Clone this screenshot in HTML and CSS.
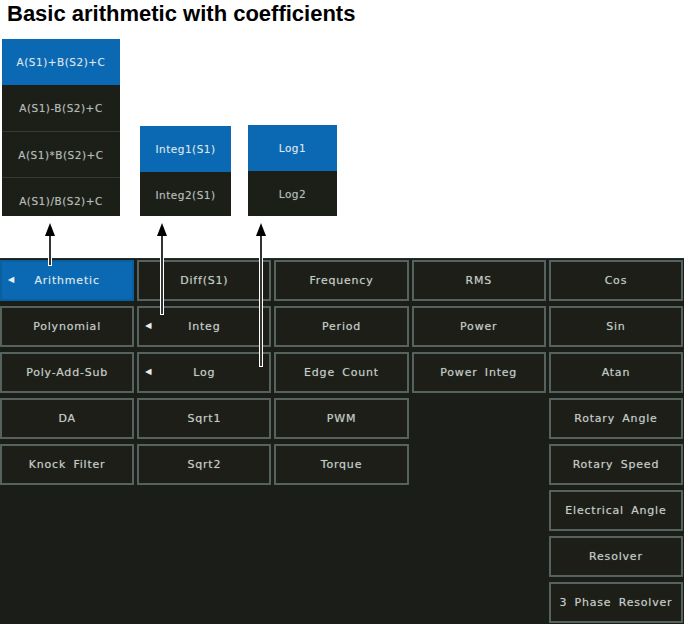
FILE: index.html
```html
<!DOCTYPE html>
<html lang="en">

<head>
        <meta charset="UTF-8">
        <meta name="viewport" content="width=device-width, initial-scale=1.0">
        <title>Basic arithmetic with coefficients</title>
        <link rel="stylesheet" href="styles.css">
</head>

<body>
        <div class="top">
                <h1 class="title">Basic arithmetic with coefficients</h1>
                <div class="menus">
                        <div class="menu menu-arith">
                                <div class="menu-item selected">A(S1)+B(S2)+C</div>
                                <div class="menu-item">A(S1)-B(S2)+C</div>
                                <div class="menu-item">A(S1)*B(S2)+C</div>
                                <div class="menu-item">A(S1)/B(S2)+C</div>
                        </div>
                        <div class="menu menu-integ">
                                <div class="menu-item selected">Integ1(S1)</div>
                                <div class="menu-item">Integ2(S1)</div>
                        </div>
                        <div class="menu menu-log">
                                <div class="menu-item selected">Log1</div>
                                <div class="menu-item">Log2</div>
                        </div>
                </div>
        </div>

        <div class="panel">
                <div class="col">
                        <div class="btn active"><span class="mark">&#9664;</span>Arithmetic</div>
                        <div class="btn">Polynomial</div>
                        <div class="btn">Poly-Add-Sub</div>
                        <div class="btn">DA</div>
                        <div class="btn">Knock Filter</div>
                </div>
                <div class="col">
                        <div class="btn">Diff(S1)</div>
                        <div class="btn"><span class="mark">&#9664;</span>Integ</div>
                        <div class="btn"><span class="mark">&#9664;</span>Log</div>
                        <div class="btn">Sqrt1</div>
                        <div class="btn">Sqrt2</div>
                </div>
                <div class="col">
                        <div class="btn">Frequency</div>
                        <div class="btn">Period</div>
                        <div class="btn">Edge Count</div>
                        <div class="btn">PWM</div>
                        <div class="btn">Torque</div>
                </div>
                <div class="col">
                        <div class="btn">RMS</div>
                        <div class="btn">Power</div>
                        <div class="btn">Power Integ</div>
                </div>
                <div class="col">
                        <div class="btn">Cos</div>
                        <div class="btn">Sin</div>
                        <div class="btn">Atan</div>
                        <div class="btn">Rotary Angle</div>
                        <div class="btn">Rotary Speed</div>
                        <div class="btn">Electrical Angle</div>
                        <div class="btn">Resolver</div>
                        <div class="btn">3 Phase Resolver</div>
                </div>
        </div>

        <!-- callout arrows from the menus down to their keys -->
        <svg class="arrows" width="684" height="626" viewBox="0 0 684 626">
                <g stroke="#ffffff" stroke-width="4">
                        <line x1="50" y1="234" x2="50" y2="266" />
                        <line x1="162" y1="234" x2="162" y2="315" />
                        <line x1="261" y1="234" x2="261" y2="367" />
                </g>
                <g stroke="#000000" stroke-width="1.6">
                        <line x1="50" y1="232" x2="50" y2="265" />
                        <line x1="162" y1="232" x2="162" y2="314" />
                        <line x1="261" y1="232" x2="261" y2="366" />
                </g>
                <g fill="#000000">
                        <polygon points="50,223 45,236 55,236" />
                        <polygon points="162,223 157,236 167,236" />
                        <polygon points="261,223 256,236 266,236" />
                </g>
        </svg>
</body>

</html>
```

FILE: styles.css
```css
body {
        margin: 0;
        background-color: #ffffff;
        font-family: "DejaVu Sans", "Liberation Sans", sans-serif;
        position: relative;
        width: 684px;
        height: 626px;
        overflow: hidden;
}

.top {
        height: 258px;
        display: flex;
        flex-direction: column;
}

.title {
        margin: 0;
        padding: 2px 0 0 7px;
        font-family: "Liberation Sans", Arial, sans-serif;
        font-size: 22px;
        line-height: 24px;
        font-weight: bold;
        color: #000000;
}

.menus {
        display: flex;
        align-items: flex-end;
        margin-top: auto;
        margin-bottom: 42px;
}

.menu {
        background-color: #1c1e18;
        overflow: hidden;
}

.menu-arith {
        width: 118px;
        height: 177px;
        margin-left: 2px;
}

.menu-integ {
        width: 91px;
        height: 90px;
        margin-left: 20px;
}

.menu-log {
        width: 89px;
        height: 91px;
        margin-left: 17px;
}

.menu-item {
        height: 46px;
        display: flex;
        align-items: center;
        justify-content: center;
        font-size: 10.5px;
        letter-spacing: 0.5px;
        color: #b4bcb6;
        border-top: 1px solid #34393a;
        box-sizing: border-box;
        text-shadow: 0 0 1px rgba(200, 210, 205, 0.4);
}

.menu-item.selected {
        background-color: #0a69b2;
        color: #dbe6ef;
        border-top: none;
}

.menu-item.selected + .menu-item {
        border-top: none;
}

.panel {
        height: 366px;
        background-color: #1a1d18;
        border-top: 1px solid #22302f;
        box-sizing: border-box;
        padding: 1px 1px 0 0;
        display: flex;
        gap: 3px;
}

.col {
        flex: 1;
        display: flex;
        flex-direction: column;
        gap: 5px;
}

.btn {
        height: 41px;
        box-sizing: border-box;
        border: 2px solid #56625d;
        background-color: #1c1e17;
        color: #c4ccc7;
        font-size: 11px;
        letter-spacing: 0.8px;
        word-spacing: 3px;
        text-shadow: 0 0 1px rgba(200, 210, 205, 0.5);
        display: flex;
        align-items: center;
        justify-content: center;
        position: relative;
}

.btn.active {
        background-color: #0a69b2;
        border-color: #0a5f9f;
        color: #dde8f0;
}

.mark {
        position: absolute;
        left: 6px;
        top: 13px;
        font-size: 8px;
        color: #e8eef0;
}

.arrows {
        position: absolute;
        left: 0;
        top: 0;
        pointer-events: none;
}
```
